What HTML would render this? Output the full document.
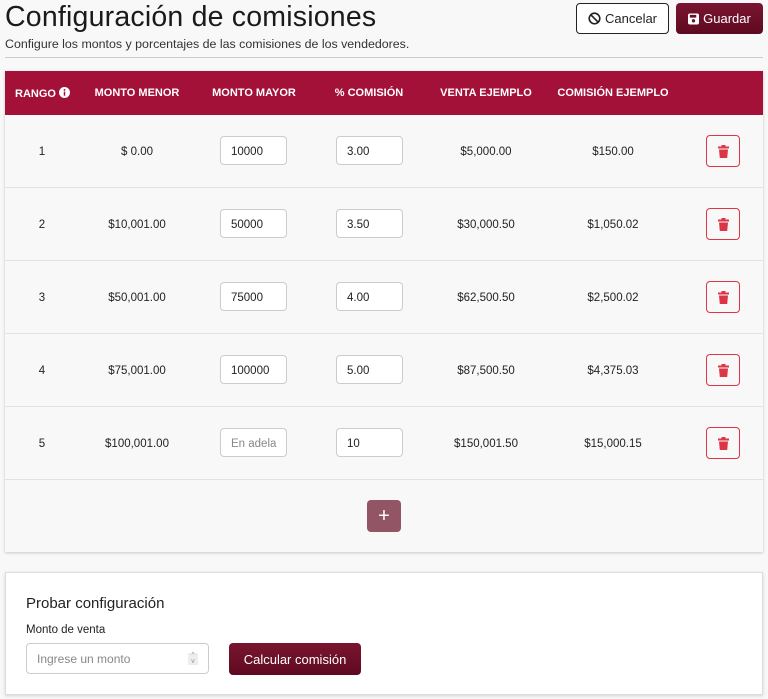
<!DOCTYPE html>
<html><head><meta charset="utf-8"><style>
*{box-sizing:border-box;margin:0;padding:0}
body{width:768px;height:699px;background:#f8f8f8;font-family:"Liberation Sans",sans-serif;color:#222;position:relative;overflow:hidden}
.a{position:absolute}
h1{position:absolute;left:5px;top:1px;font-size:28.5px;font-weight:normal;color:#1a1a1a;letter-spacing:0.2px}
.sub{left:5px;top:37px;font-size:12.4px;color:#333}
.hr{left:5px;top:57px;width:758px;height:1px;background:#ccc}
.btn{position:absolute;top:3px;height:31px;border-radius:4px;font-size:13px;display:flex;align-items:center;justify-content:center;gap:4px}
.card{left:5px;top:71px;width:758px;height:481px;background:#f8f8f8;box-shadow:0 1px 3px rgba(0,0,0,.2)}
.head{left:5px;top:71px;width:758px;height:44px;background:#a31038;color:#fff;font-size:11px;font-weight:bold}
.head span{position:absolute;top:16px;transform:translateX(-50%);white-space:nowrap}
.row{position:absolute;left:5px;width:758px;height:73px;border-bottom:1px solid #e2e2e2;font-size:11.5px}
.row .c{position:absolute;top:31px;transform:translateX(-50%);white-space:nowrap;color:#222}
.in{position:absolute;top:21px;width:67px;height:29px;border:1px solid #ccc;border-radius:4px;background:#fff;padding-left:10px;padding-top:2px;line-height:27px;font-size:11.5px}
.del{position:absolute;left:701px;top:20px;width:34px;height:32px;border:1px solid #dc3545;border-radius:4px;display:flex;align-items:center;justify-content:center}
</style></head><body>
<h1>Configuración de comisiones</h1>
<div class="a sub">Configure los montos y porcentajes de las comisiones de los vendedores.</div>
<div class="a hr"></div>
<div class="btn" style="left:576px;width:93px;border:1px solid #222;background:#fff;color:#222"><svg width="13" height="13" viewBox="0 0 16 16"><circle cx="8" cy="8" r="6.5" fill="none" stroke="#222" stroke-width="2"/><line x1="3.5" y1="3.5" x2="12.5" y2="12.5" stroke="#222" stroke-width="2"/></svg>Cancelar</div>
<div class="btn" style="left:676px;width:87px;background:linear-gradient(#7a1530,#5e0a20);color:#fff"><svg width="11" height="12" viewBox="0 0 12 12"><rect x="0" y="0" width="12" height="12" rx="2" fill="#fff"/><rect x="2" y="1.5" width="7" height="3" fill="#6a0f26"/><circle cx="6" cy="8" r="1.8" fill="#6a0f26"/></svg>Guardar</div>
<div class="a card"></div>
<div class="a head">
<span style="left:10px;transform:none">RANGO <svg width="11" height="11" viewBox="0 0 12 12" style="vertical-align:-1px"><circle cx="6" cy="6" r="6" fill="#fff"/><rect x="5.2" y="5" width="1.6" height="4.5" fill="#a31038"/><circle cx="6" cy="3.2" r="1" fill="#a31038"/></svg></span>
<span style="left:132px">MONTO MENOR</span><span style="left:249px">MONTO MAYOR</span><span style="left:364px">% COMISIÓN</span><span style="left:481px">VENTA EJEMPLO</span><span style="left:608px">COMISIÓN EJEMPLO</span>
</div>
<div class="row" style="top:115px"><span class="c" style="left:37px">1</span><span class="c" style="left:132px">$ 0.00</span><div class="in" style="left:215px">10000</div><div class="in" style="left:331px">3.00</div><span class="c" style="left:481px">$5,000.00</span><span class="c" style="left:608px">$150.00</span><div class="del"><svg width="11" height="13" viewBox="0 0 11 13"><rect x="0" y="1.5" width="11" height="2" fill="#dc3545"/><rect x="3.5" y="0" width="4" height="2" fill="#dc3545"/><path d="M1 4.5h9l-.8 8.5H1.8z" fill="#dc3545"/></svg></div></div>
<div class="row" style="top:188px"><span class="c" style="left:37px">2</span><span class="c" style="left:132px">$10,001.00</span><div class="in" style="left:215px">50000</div><div class="in" style="left:331px">3.50</div><span class="c" style="left:481px">$30,000.50</span><span class="c" style="left:608px">$1,050.02</span><div class="del"><svg width="11" height="13" viewBox="0 0 11 13"><rect x="0" y="1.5" width="11" height="2" fill="#dc3545"/><rect x="3.5" y="0" width="4" height="2" fill="#dc3545"/><path d="M1 4.5h9l-.8 8.5H1.8z" fill="#dc3545"/></svg></div></div>
<div class="row" style="top:261px"><span class="c" style="left:37px">3</span><span class="c" style="left:132px">$50,001.00</span><div class="in" style="left:215px">75000</div><div class="in" style="left:331px">4.00</div><span class="c" style="left:481px">$62,500.50</span><span class="c" style="left:608px">$2,500.02</span><div class="del"><svg width="11" height="13" viewBox="0 0 11 13"><rect x="0" y="1.5" width="11" height="2" fill="#dc3545"/><rect x="3.5" y="0" width="4" height="2" fill="#dc3545"/><path d="M1 4.5h9l-.8 8.5H1.8z" fill="#dc3545"/></svg></div></div>
<div class="row" style="top:334px"><span class="c" style="left:37px">4</span><span class="c" style="left:132px">$75,001.00</span><div class="in" style="left:215px">100000</div><div class="in" style="left:331px">5.00</div><span class="c" style="left:481px">$87,500.50</span><span class="c" style="left:608px">$4,375.03</span><div class="del"><svg width="11" height="13" viewBox="0 0 11 13"><rect x="0" y="1.5" width="11" height="2" fill="#dc3545"/><rect x="3.5" y="0" width="4" height="2" fill="#dc3545"/><path d="M1 4.5h9l-.8 8.5H1.8z" fill="#dc3545"/></svg></div></div>
<div class="row" style="top:407px"><span class="c" style="left:37px">5</span><span class="c" style="left:132px">$100,001.00</span><div class="in" style="left:215px;color:#888;overflow:hidden">En adela</div><div class="in" style="left:331px">10</div><span class="c" style="left:481px">$150,001.50</span><span class="c" style="left:608px">$15,000.15</span><div class="del"><svg width="11" height="13" viewBox="0 0 11 13"><rect x="0" y="1.5" width="11" height="2" fill="#dc3545"/><rect x="3.5" y="0" width="4" height="2" fill="#dc3545"/><path d="M1 4.5h9l-.8 8.5H1.8z" fill="#dc3545"/></svg></div></div>
<div class="a" style="left:367px;top:500px;width:34px;height:32px;background:#915566;border-radius:4px;color:#fff;font-size:20px;display:flex;align-items:center;justify-content:center">+</div>
<div class="a" style="left:5px;top:572px;width:758px;height:123px;background:#fff;border:1px solid #ddd;box-shadow:0 1px 3px rgba(0,0,0,.15)"></div>
<div class="a" style="left:26px;top:595px;font-size:15px;color:#222">Probar configuración</div>
<div class="a" style="left:26px;top:624px;font-size:11.5px;color:#222">Monto de venta</div>
<div class="a" style="left:26px;top:643px;width:183px;height:31px;border:1px solid #ccc;border-radius:4px;background:#fff;font-size:12px;color:#888;padding:8px 10px">Ingrese un monto<span style="position:absolute;right:10px;top:9px;width:10px;height:12px;background:#eee;font-size:7px;color:#999;text-align:center;line-height:6px">^<br>v</span></div>
<div class="a" style="left:229px;top:643px;width:132px;height:32px;border-radius:4px;background:linear-gradient(#7a1530,#5e0a20);color:#fff;font-size:13px;display:flex;align-items:center;justify-content:center">Calcular comisión</div>
</body></html>
